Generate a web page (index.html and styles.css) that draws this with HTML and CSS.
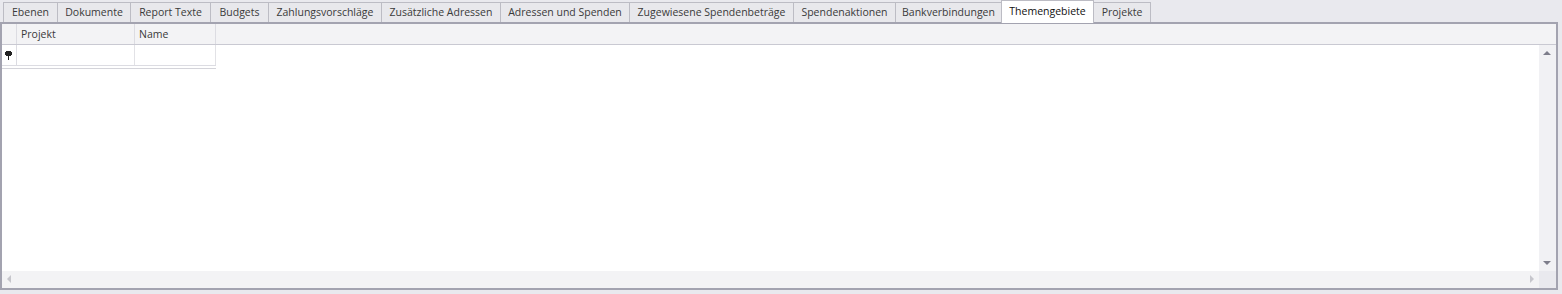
FILE: index.html
```html
<!DOCTYPE html>
<html>
<head>
    <title>Themengebiete</title>
    <link rel="stylesheet" href="styles.css">
</head>
<body>
    <div class="tab-strip">
        <div class="tab" style="width: 54px">Ebenen</div>
        <div class="tab" style="width: 73px">Dokumente</div>
        <div class="tab" style="width: 80px">Report Texte</div>
        <div class="tab" style="width: 58px">Budgets</div>
        <div class="tab" style="width: 113px">Zahlungsvorschläge</div>
        <div class="tab" style="width: 119px">Zusätzliche Adressen</div>
        <div class="tab" style="width: 129px">Adressen und Spenden</div>
        <div class="tab" style="width: 164px">Zugewiesene Spendenbeträge</div>
        <div class="tab" style="width: 102px">Spendenaktionen</div>
        <div class="tab" style="width: 106px">Bankverbindungen</div>
        <div class="tab tab-active" style="width: 93px">Themengebiete</div>
        <div class="tab tab-last" style="width: 57px">Projekte</div>
    </div>

    <div class="panel">
        <div class="grid-header">
            <div class="indicator-cell"></div>
            <div class="header-cell col-projekt">Projekt</div>
            <div class="header-cell col-name">Name</div>
        </div>
        <div class="grid-main">
            <div class="grid-body">
                <div class="grid-row">
                    <div class="indicator-cell row-indicator">
                        <svg width="7" height="9" viewBox="0 0 7 9">
                            <rect x="1" y="0" width="5" height="1" fill="#222"/>
                            <rect x="0" y="1" width="7" height="3" fill="#222"/>
                            <rect x="1" y="4" width="5" height="1" fill="#222"/>
                            <rect x="3" y="5" width="1" height="4" fill="#222"/>
                        </svg>
                    </div>
                    <div class="cell col-projekt"></div>
                    <div class="cell col-name"></div>
                </div>
                <div class="row-footer"></div>
            </div>
            <div class="vscroll">
                <span class="arrow arrow-up"></span>
                <span class="arrow arrow-down"></span>
            </div>
        </div>
        <div class="hscroll-row">
            <div class="hscroll">
                <span class="arrow arrow-left"></span>
                <span class="arrow arrow-right"></span>
            </div>
            <div class="scroll-corner"></div>
        </div>
    </div>
</body>
</html>
```

FILE: styles.css
```css
body {
    margin: 0;
    background: #e9e9ee;
    font-family: "Open Sans", "DejaVu Sans", sans-serif;
    font-size: 10.5px;
    color: #3a3a3a;
    width: 1562px;
    height: 294px;
    overflow: hidden;
}

.tab-strip {
    display: flex;
    align-items: flex-end;
    height: 22px;
    padding-left: 3px;
}
.tab {
    box-sizing: border-box;
    height: 20px;
    line-height: 18px;
    text-align: center;
    white-space: nowrap;
    background: #e8e8ec;
    border: 1px solid #bcbcc4;
    border-right: none;
    border-bottom: none;
}
.tab-last { border-right: 1px solid #bcbcc4; }
.tab-active {
    height: 23px;
    line-height: 20px;
    background: #fff;
    color: #111;
    margin-bottom: -1px;
    border-right: 1px solid #bcbcc4;
    position: relative;
    z-index: 1;
}
.tab-active + .tab { border-left: none; }

.panel {
    box-sizing: border-box;
    width: 1558px;
    height: 268px;
    border: 2px solid #a3a3b0;
    background: #fff;
    display: flex;
    flex-direction: column;
}

.grid-header {
    display: flex;
    height: 20px;
    background: #f3f3f5;
    border-bottom: 1px solid #c9c9d2;
}
.indicator-cell {
    width: 15px;
    border-right: 1px solid #dcdce2;
    box-sizing: border-box;
}
.header-cell {
    box-sizing: border-box;
    line-height: 20px;
    padding-left: 4px;
    border-right: 1px solid #dcdce2;
}
.col-projekt { width: 118px; }
.col-name { width: 81px; }

.grid-main {
    flex: 1;
    display: flex;
}
.grid-body { flex: 1; }
.grid-row {
    display: flex;
    height: 20px;
    width: 214px;
    border-bottom: 1px solid #dcdce2;
}
.cell {
    box-sizing: border-box;
    border-right: 1px solid #e2e2e6;
}
.row-indicator {
    display: flex;
    align-items: center;
    justify-content: center;
    padding-right: 2px;
}
.row-footer {
    width: 214px;
    height: 1px;
    margin-top: 1px;
    border-bottom: 1px solid #d4d4da;
}

.vscroll {
    position: relative;
    width: 17px;
    background: #f1f1f4;
}
.hscroll-row {
    display: flex;
    height: 17px;
}
.hscroll {
    position: relative;
    flex: 1;
    background: #f3f3f5;
}
.scroll-corner {
    width: 17px;
    background: #e9e9ee;
}

.arrow {
    position: absolute;
    width: 0;
    height: 0;
    border: 4px solid transparent;
}
.arrow-up {
    left: 4px;
    top: 2px;
    border-bottom-color: #7d7d8a;
}
.arrow-down {
    left: 4px;
    bottom: 2px;
    border-top-color: #7d7d8a;
}
.arrow-left {
    left: 1px;
    top: 4px;
    border-right-color: #c6c6cc;
}
.arrow-right {
    right: 1px;
    top: 4px;
    border-left-color: #c6c6cc;
}
```
